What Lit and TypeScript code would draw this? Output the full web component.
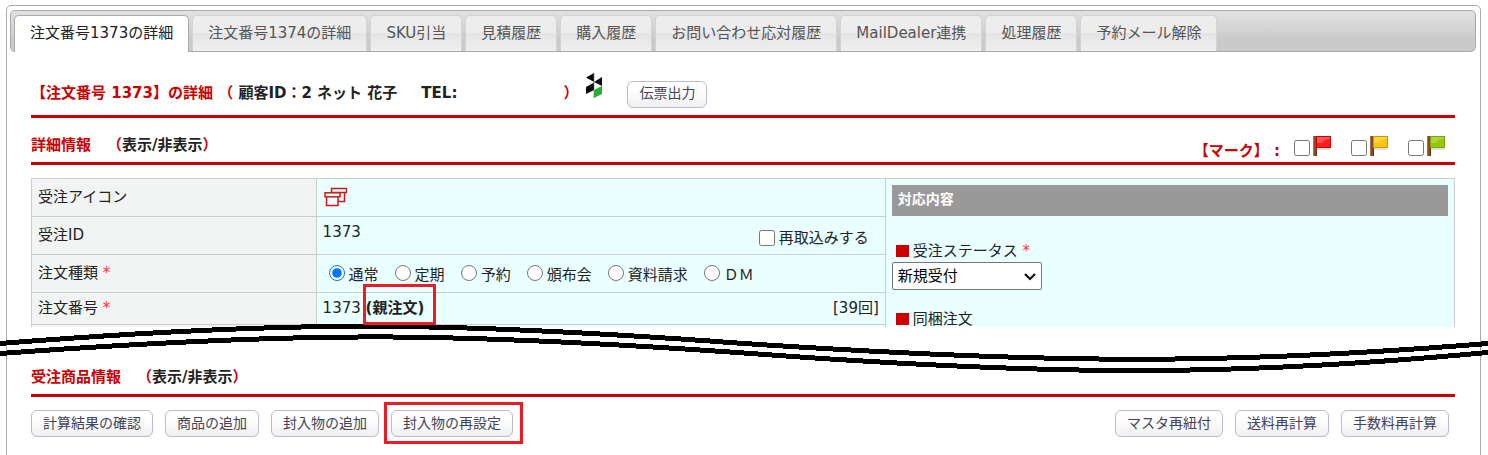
import { LitElement, html, css, svg } from "lit";
import { customElement, state } from "lit/decorators.js";

const TABS = [
  "注文番号1373の詳細",
  "注文番号1374の詳細",
  "SKU引当",
  "見積履歴",
  "購入履歴",
  "お問い合わせ応対履歴",
  "MailDealer連携",
  "処理履歴",
  "予約メール解除",
];

const ORDER_TYPES = ["通常", "定期", "予約", "頒布会", "資料請求", "ＤＭ"];

const FLAGS = [
  { name: "赤", fill: "#ff1d1d", light: "#ff7070", edge: "#c80000" },
  { name: "黄", fill: "#f8c60f", light: "#fbd95a", edge: "#c99700" },
  { name: "緑", fill: "#98c70f", light: "#b9dc50", edge: "#7aa800" },
];

@customElement("app-root")
export class AppRoot extends LitElement {
  @state() private activeTab = 0;
  @state() private orderType = 0;

  static styles = css`
    :host {
      display: block;
      height: 100vh;
      overflow: hidden;
      box-sizing: border-box;
      padding: 5px 7px 0 6px;
      background: #fff;
      color: #222;
      font: 15px/20px "DejaVu Sans", "Noto Sans CJK JP", sans-serif;
    }
    * {
      box-sizing: border-box;
    }
    a {
      color: inherit;
      text-decoration: none;
    }
    input {
      width: 16px;
      height: 16px;
      margin: 0;
      flex: none;
    }
    label {
      display: inline-flex;
      align-items: center;
    }
    .panel {
      min-height: calc(100vh + 10px);
      border: 1px solid #aaa;
      border-radius: 5px;
      padding: 4px 4px 0 3px;
    }
    .tabs {
      display: flex;
      gap: 3px;
      height: 42px;
      padding: 4px 4px 0 3px;
      border: 1px solid #aaa;
      border-radius: 5px;
      background: linear-gradient(#e2e2e2, #c9c9c9 75%, #cbcbcb);
    }
    .tab {
      height: 36px;
      padding: 7px 15px 0;
      border: 1px solid #d3d3d3;
      border-bottom: 0;
      border-radius: 5px 5px 0 0;
      background: linear-gradient(#ededed 50%, #e4e4e4 50%, #efefef);
      color: #555;
      white-space: nowrap;
    }
    .tab.active {
      height: 37px;
      border-color: #aaa;
      background: #fff;
      color: #212121;
    }
    .content {
      padding: 0 21px;
    }
    .heading {
      display: flex;
      align-items: center;
      margin: 0;
      border-bottom: 3px solid #c00;
      color: #c00;
      font-size: 15px;
      font-weight: bold;
      white-space: pre;
    }
    .heading.title {
      height: 66px;
      padding-top: 18px;
    }
    .heading.detail {
      height: 47px;
      padding-top: 9px;
    }
    .heading.items {
      height: 39px;
      padding-top: 2px;
    }
    .dark {
      color: #222;
    }
    .tel {
      margin-left: 24px;
      color: #222;
    }
    .close {
      margin-left: 106px;
    }
    .brand {
      width: 16px;
      height: 25px;
      margin: 0 25px 15px 8px;
    }
    .title .btn {
      margin-top: 3px;
    }
    .toggle {
      margin-left: 16px;
    }
    .marks {
      display: flex;
      align-items: center;
      gap: 20px;
      margin-left: auto;
      padding-right: 10px;
    }
    .marks > span {
      margin: 12px -6px 0 0;
    }
    .mark {
      align-items: flex-end;
      gap: 3px;
      padding-top: 2px;
    }
    .flag {
      width: 18px;
      height: 20px;
      display: block;
    }
    .btn {
      height: 27px;
      padding: 0 11px 2px;
      border: 1px solid #bbbbcb;
      border-radius: 6px;
      background: linear-gradient(#fff 30%, #f0f0f0);
      color: #444455;
      font: 14px/20px "DejaVu Sans", "Noto Sans CJK JP", sans-serif;
      white-space: nowrap;
    }
    .excerpt {
      height: 149px;
      margin-top: 13px;
      overflow: hidden;
    }
    table {
      width: 100%;
      border-collapse: collapse;
      table-layout: fixed;
    }
    .c1 {
      width: 20%;
    }
    .c2 {
      width: 40%;
    }
    tr {
      height: 38px;
    }
    tr.short {
      height: 32px;
    }
    th,
    td {
      padding: 0 6px 1px;
      border: 1px solid #ccc;
      text-align: left;
      font-weight: normal;
      vertical-align: middle;
      background: #eaffff;
    }
    th {
      background: #f2f4f3;
    }
    .req {
      color: #f33;
    }
    .order-icon {
      display: block;
      width: 24px;
      height: 20px;
    }
    .split {
      display: flex;
      justify-content: space-between;
    }
    .reload {
      gap: 4px;
      padding: 6px 10px 0 0;
    }
    .types {
      display: flex;
      gap: 16px;
      padding-left: 6px;
    }
    .types label {
      gap: 4px;
    }
    .types span {
      padding-top: 4px;
    }
    .parent {
      display: inline-block;
      position: relative;
      font-weight: bold;
    }
    .ring {
      position: absolute;
      border: 3px solid #ed1c24;
      pointer-events: none;
      z-index: 2;
    }
    .parent .ring {
      inset: -14px -12px -7px -3px;
    }
    .ringed {
      position: relative;
      display: flex;
    }
    .ringed .ring {
      inset: -8px -10px -7px -7px;
    }
    td.side {
      padding: 6px;
      vertical-align: top;
    }
    .side h3 {
      height: 31px;
      margin: 0 0 25px;
      padding: 4px 6px;
      background: #999;
      color: #fff;
      font-size: 14px;
      line-height: 20px;
    }
    .field {
      display: flex;
      align-items: center;
      gap: 4px;
      padding-left: 4px;
    }
    .field::before {
      content: "";
      width: 13px;
      height: 12px;
      background: #c00;
    }
    .select {
      position: relative;
      width: 150px;
      margin: 1px 0 19px;
    }
    select {
      appearance: none;
      display: block;
      width: 100%;
      height: 28px;
      padding: 0 24px 1px 5px;
      border: 1px solid #767676;
      border-radius: 2px;
      background: #fff;
      color: #000;
      font: 15px/20px "DejaVu Sans", "Noto Sans CJK JP", sans-serif;
    }
    .chevron {
      position: absolute;
      right: 6px;
      top: 11px;
      width: 12px;
      height: 8px;
      pointer-events: none;
    }
    .gap {
      position: relative;
      height: 31px;
    }
    .wave {
      position: absolute;
      left: -31px;
      top: -7px;
      width: 100vw;
      height: 54px;
      z-index: 1;
      pointer-events: none;
    }
    .actions {
      display: flex;
      gap: 12px;
      padding: 13px 6px 0 0;
    }
    .push {
      margin-left: auto;
    }
  `;

  private flag(f: (typeof FLAGS)[number]) {
    return svg`<svg class="flag" viewBox="0 0 18 20" aria-hidden="true">
      <rect x="0" y="0" width="4" height="20" fill="#8a4a26"/>
      <rect x="0" y="0" width="1" height="20" fill="#a9704e"/>
      <rect x="3" y="12" width="1" height="8" fill="#66300f"/>
      <rect x="4" y="12" width="13" height="2" fill="#000" opacity=".12"/>
      <rect x="3" y="0" width="15" height="12" fill=${f.edge}/>
      <rect x="4" y="1" width="13" height="10" fill=${f.fill}/>
      <path d="M4 1H17V3Q10 3 9 7H4Z" fill=${f.light} opacity=".7"/>
    </svg>`;
  }

  render() {
    return html`
      <div class="panel">
        <nav class="tabs">
          ${TABS.map(
            (t, i) => html`<a
              class="tab ${i === this.activeTab ? "active" : ""}"
              href="#"
              @click=${(e: Event) => {
                e.preventDefault();
                this.activeTab = i;
              }}
              >${t}</a
            >`
          )}
        </nav>
        <main class="content">
          <h1 class="heading title"><span>【注文番号 1373】の詳細 （</span><span class="dark"> 顧客ID：2 ネット 花子</span><span class="tel">TEL:</span><span class="close">）</span><svg class="brand" viewBox="0 0 16 25" aria-hidden="true">
              <path d="M0 4.5L8 0V9Z M8 9L16 4V13Z M0 14L8 9.5V17L0 21Z" fill="#0a0a0a"/>
              <path d="M8 17L16 13V21L8 25Z" fill="#27b035"/>
              <path d="M8 0V25" stroke="#777" stroke-width=".6"/>
            </svg><button class="btn" type="button">伝票出力</button></h1>

          <h2 class="heading detail"><span>詳細情報</span><span class="toggle">（<a class="dark" href="#">表示/非表示</a>）</span><div class="marks"><span>【マーク】 :</span>${FLAGS.map(
            (f) => html`<label class="mark"><input type="checkbox" aria-label=${f.name} />${this.flag(f)}</label>`
          )}</div></h2>

          <div class="excerpt">
            <table>
              <colgroup>
                <col class="c1" />
                <col class="c2" />
                <col />
              </colgroup>
              <tbody>
                <tr>
                  <th scope="row">受注アイコン</th>
                  <td>
                    <svg class="order-icon" viewBox="0 0 24 20" fill="#eaffff" stroke="#d01818" stroke-width="1.5" role="img" aria-label="同梱">
                      <path d="M10 5V14.5H21.5V5" />
                      <rect x="8.5" y="1.5" width="15" height="4" />
                      <path d="M3.5 10V18.5H15V10" />
                      <rect x="2" y="5.8" width="15" height="4" />
                    </svg>
                  </td>
                  <td class="side" rowspan="5">
                    <h3>対応内容</h3>
                    <label class="field" for="status"><span>受注ステータス <span class="req">*</span></span></label>
                    <div class="select">
                      <select id="status"><option>新規受付</option></select>
                      <svg class="chevron" viewBox="0 0 12 8" aria-hidden="true"><path d="M1 1L6 6L11 1" fill="none" stroke="#111" stroke-width="2.2" /></svg>
                    </div>
                    <div class="field">同梱注文</div>
                  </td>
                </tr>
                <tr>
                  <th scope="row">受注ID</th>
                  <td>
                    <div class="split">
                      <span>1373</span>
                      <label class="reload"><input type="checkbox" />再取込みする</label>
                    </div>
                  </td>
                </tr>
                <tr>
                  <th scope="row">注文種類 <span class="req">*</span></th>
                  <td>
                    <div class="types">
                      ${ORDER_TYPES.map(
                        (t, i) => html`<label
                          ><input
                            type="radio"
                            name="type"
                            .checked=${i === this.orderType}
                            @change=${() => (this.orderType = i)}
                          /><span>${t}</span></label
                        >`
                      )}
                    </div>
                  </td>
                </tr>
                <tr class="short">
                  <th scope="row">注文番号 <span class="req">*</span></th>
                  <td>
                    <div class="split">
                      <span>1373 <span class="parent">(親注文)<span class="ring"></span></span></span>
                      <span>[39回]</span>
                    </div>
                  </td>
                </tr>
                <tr>
                  <th></th>
                  <td></td>
                </tr>
              </tbody>
            </table>
          </div>

          <div class="gap">
            <svg class="wave" viewBox="0 0 1488 54" preserveAspectRatio="none" fill="none" stroke="#000" stroke-width="5" shape-rendering="crispEdges" aria-hidden="true">
              <path d="M0 23.5C290 0.5 434 0.5 744 23.5C1060 44.5 1230 44.5 1488 23.5" />
              <path d="M0 33.5C300 11.5 440 11.5 744 33C1060 56.5 1230 56.5 1488 32.5" />
            </svg>
          </div>

          <h2 class="heading items"><span>受注商品情報</span><span class="toggle">（<a class="dark" href="#">表示/非表示</a>）</span></h2>
          <div class="actions">
            <button class="btn" type="button">計算結果の確認</button>
            <button class="btn" type="button">商品の追加</button>
            <button class="btn" type="button">封入物の追加</button>
            <div class="ringed"><button class="btn" type="button">封入物の再設定</button><span class="ring"></span></div>
            <button class="btn push" type="button">マスタ再紐付</button>
            <button class="btn" type="button">送料再計算</button>
            <button class="btn" type="button">手数料再計算</button>
          </div>
        </main>
      </div>
    `;
  }
}
